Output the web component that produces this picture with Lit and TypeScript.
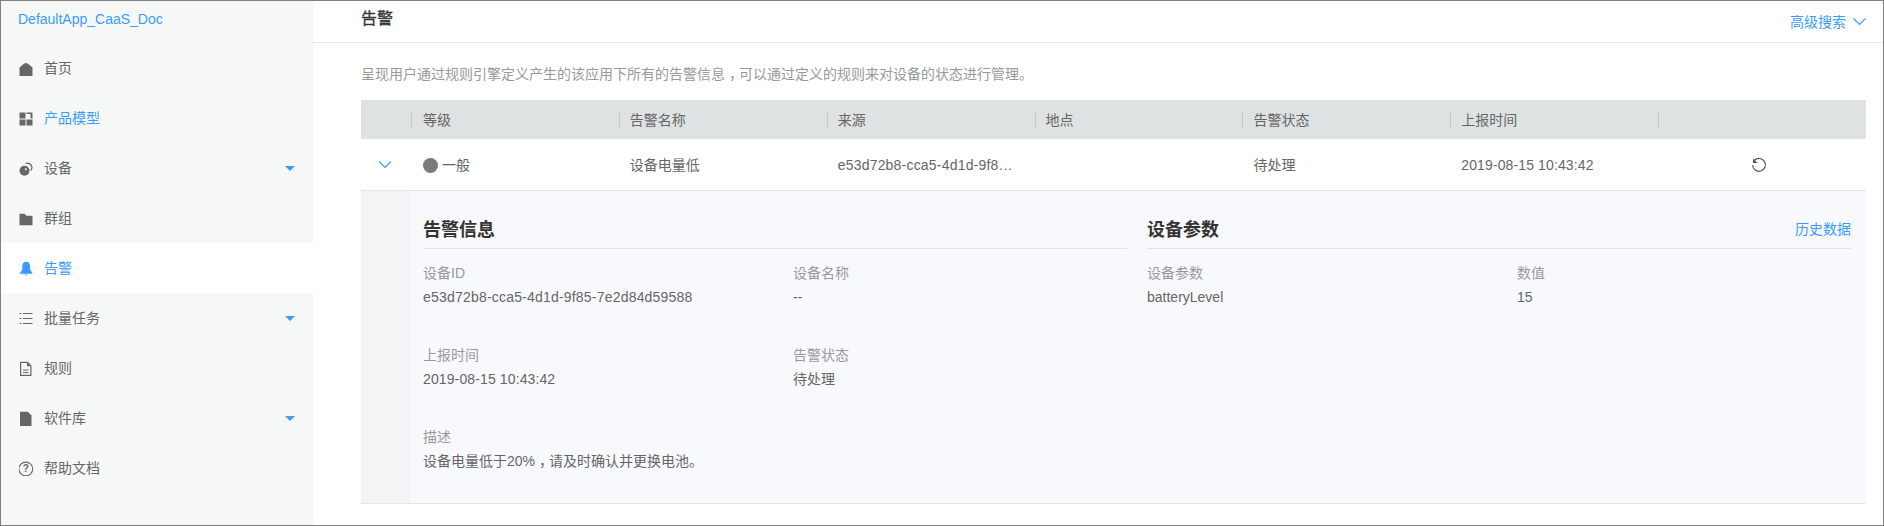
import { LitElement, html, css, svg } from "lit";
import { customElement } from "lit/decorators.js";

const icons: Record<string, unknown> = {
  home: svg`<path fill="currentColor" d="M.5 16V7.500L4 4.500C5 3.500 6 3 7 3s2 .5 3 1.500l3.500 3V16z"/>`,
  model: svg`<path fill="currentColor" d="M.5 2.500h6v6h-6zM.5 9.500h6v6h-6zM7.500 9.500h6v6h-6zM7.500 2.500h6v6h-2v-4.500h-4z"/>`,
  device: svg`<circle cx="5.500" cy="10.700" r="5" fill="currentColor"/><circle cx="6.800" cy="9.200" r="1" fill="#f6f8f8"/><path fill="none" stroke="currentColor" stroke-width="1.300" d="M6.500 3.500A4.800 4.800 0 0 1 13 7.500a4.800 4.800 0 0 1-1.500 3"/>`,
  group: svg`<path fill="currentColor" d="M.5 3.800h5l2 2h6v9.400H.5z"/>`,
  bell: svg`<path fill="currentColor" d="M7 1.700c-2.500 0-3.700 2-3.700 4.300v3.500L1 13v.7h12.400V13l-2.300-3.500V6c0-2.300-1.300-4.300-4.100-4.300zM5.300 14.400h3.400L7 15.800z"/>`,
  list: svg`<path fill="currentColor" d="M.5 3h2v1.100h-2zM4 3h9.500v1.100H4zM.5 8h2v1.100h-2zM4 8h9.500v1.100H4zM.5 13h2v1.100h-2zM4 13h9.500v1.100H4z"/>`,
  rule: svg`<path fill="none" stroke="currentColor" stroke-width="1.200" d="M1.600 2.300h6.900l3.400 3.400v9.700H1.600z"/><path fill="currentColor" d="M8 2.300l4 4H8zM4 9.500h5.500v1.100H4zM4 12h5.500v1.100H4z"/>`,
  file: svg`<path fill="currentColor" d="M1 1.700h7.800L12.500 5.400V16H1z"/>`,
  help: svg`<circle cx="6.800" cy="9" r="6.900" fill="none" stroke="currentColor" stroke-width="1.100"/><text x="6.800" y="12.300" text-anchor="middle" font-size="10" font-weight="700" font-family="Liberation Sans" fill="currentColor">?</text>`,
};

const nav = [
  ["home", "首页", 0, 0],
  ["model", "产品模型", 1, 0],
  ["device", "设备", 0, 1],
  ["group", "群组", 0, 0],
  ["bell", "告警", 2, 0],
  ["list", "批量任务", 0, 1],
  ["rule", "规则", 0, 0],
  ["file", "软件库", 0, 1],
  ["help", "帮助文档", 0, 0],
] as const;

const chevron = svg`<path fill="none" stroke="currentColor" stroke-width="1.100" d="M.5.500 6.500 6.500 12.500.500"/>`;
const comma = html`<span class="cm">，</span>`;

@customElement("app-root")
export class AppRoot extends LitElement {
  static styles = css`
    :host {
      display: block;
      width: 1884px;
      height: 526px;
      box-sizing: border-box;
      border: 1px solid #7f7f7f;
      font: 14px/20px "Liberation Sans", "Noto Sans CJK SC", sans-serif;
      color: #666;
      overflow: hidden;
      background: #fff;
    }
    .shell { display: flex; height: 524px; }
    .side { width: 312px; flex: none; background: #f6f8f8; }
    .app { height: 42px; padding: 7px 0 0 17px; box-sizing: border-box; color: #3d9bff; line-height: 22px; }
    .nav { height: 50px; display: flex; align-items: center; padding: 0 17px 0 18px; color: #666; }
    .nav.blue { color: #3d9bff; }
    .nav.on { color: #3d9bff; background: #fff; }
    .nav svg.ic { width: 16px; height: 16px; margin-right: 9px; flex: none; color: #666; }
    .nav.on svg.ic { color: #3d9bff; }
    .nav span { flex: 1; }
    .tri { width: 0; height: 0; border: 5px solid transparent; border-top: 5px solid #3d9bff; border-bottom: 0; margin-right: 1px; }
    .main { flex: 1; min-width: 0; }
    .top { height: 42px; box-sizing: border-box; border-bottom: 1px solid #e6e6e6; display: flex; justify-content: space-between; padding: 0 17px 0 48px; }
    .top h1 { margin: 0; font-size: 16px; font-weight: 400; color: #333; line-height: 36px; -webkit-text-stroke: .3px #333; }
    .adv { color: #3d9bff; display: flex; align-items: center; gap: 7px; height: 41px; }
    .adv svg { width: 13px; height: 7px; }
    .desc { margin: 0; padding: 21px 0 0 48px; height: 57px; box-sizing: border-box; color: #999; }
    .cm { font-feature-settings: "halt"; padding: 0 3px 0 4px; }
    .table { margin: 0 17px 0 48px; }
    .row { display: grid; grid-template-columns: 50px repeat(7, 1fr); align-items: center; }
    .head { height: 39px; background: #dfe2e2; }
    .head div { height: 14px; line-height: 14px; border-left: 1px solid #c4c7c7; padding-left: 10px; }
    .head div:first-child { border: 0; padding: 0; }
    .head div:nth-child(2) { padding-left: 11px; }
    .body { height: 52px; box-sizing: border-box; border-bottom: 1px solid #e5e5e5; }
    .body > div { padding-left: 11px; white-space: nowrap; overflow: hidden; text-overflow: ellipsis; padding-right: 18px; }
    .body > div:first-child { padding: 0 0 0 17px; color: #3d9bff; display: flex; }
    .body svg.ch { width: 14px; height: 7px; }
    .dot { display: inline-block; width: 15px; height: 15px; border-radius: 50%; background: #7b7b7b; vertical-align: -3px; margin: 0 4px 0 1px; }
    .uuid { letter-spacing: .2px; }
    .date { letter-spacing: .12px; }
    .reload { width: 16px; height: 16px; display: block; margin-left: 82px; }
    .detail { display: flex; height: 313px; box-sizing: border-box; border-bottom: 1px solid #e5e5e5; background: #f3f4f6; }
    .panel { margin-left: 49px; flex: 1; background: #f8f9fd; display: flex; padding: 0 15px 0 13px; }
    .sec { width: 724px; flex: none; }
    .sec.r { flex: 1; width: auto; }
    .sec h2 { margin: 0; height: 58px; box-sizing: border-box; padding-top: 25px; border-bottom: 1px solid #e2e4e6; font-size: 18px; line-height: 28px; font-weight: 700; color: #333; display: flex; justify-content: space-between; margin-right: 20px; }
    .sec.r h2 { margin-right: 0; }
    .sec h2 a { font-size: 14px; font-weight: 400; color: #3d9bff; line-height: 28px; margin-top: -1px; }
    .grid { display: grid; grid-template-columns: 370px 1fr; grid-auto-rows: 82px; padding-top: 14px; }
    .k { color: #999; height: 24px; line-height: 20px; }
    .v { color: #666; }
  `;

  render() {
    const cols = ["", "等级", "告警名称", "来源", "地点", "告警状态", "上报时间", ""];
    const field = (k: string, v: unknown) => html`<div><div class="k">${k}</div><div class="v">${v}</div></div>`;
    const uuid = "e53d72b8-cca5-4d1d-9f85-7e2d84d59588";
    const date = "2019-08-15 10:43:42";
    return html`<div class="shell">
      <aside class="side">
        <div class="app">DefaultApp_CaaS_Doc</div>
        ${nav.map(([ic, label, st, dd]) => html`<div class="nav ${st === 1 ? "blue" : st === 2 ? "on" : ""}">
          <svg class="ic" viewBox="0 0 16 16">${icons[ic]}</svg><span>${label}</span>${dd ? html`<i class="tri"></i>` : ""}
        </div>`)}
      </aside>
      <main class="main">
        <div class="top"><h1>告警</h1><div class="adv">高级搜索<svg viewBox="0 0 13 7">${chevron}</svg></div></div>
        <p class="desc">呈现用户通过规则引擎定义产生的该应用下所有的告警信息${comma}可以通过定义的规则来对设备的状态进行管理。</p>
        <div class="table">
          <div class="row head">${cols.map((c) => html`<div>${c}</div>`)}</div>
          <div class="row body">
            <div><svg class="ch" viewBox="0 0 13 7">${chevron}</svg></div>
            <div><i class="dot"></i>一般</div>
            <div>设备电量低</div>
            <div class="uuid">${uuid}</div>
            <div></div>
            <div>待处理</div>
            <div class="date">${date}</div>
            <div><svg class="reload" viewBox="0 0 16 16"><path fill="none" stroke="#555" stroke-width="1.200" d="M3.500 3.300A6.400 6.400 0 1 1 1.600 8"/><path fill="#555" d="M2 1.500v4.500h4.500z"/></svg></div>
          </div>
          <div class="detail"><div class="panel">
            <section class="sec">
              <h2>告警信息</h2>
              <div class="grid">
                ${field("设备ID", html`<span class="uuid">${uuid}</span>`)}
                ${field("设备名称", "--")}
                ${field("上报时间", html`<span class="date">${date}</span>`)}
                ${field("告警状态", "待处理")}
                ${field("描述", html`设备电量低于20%${comma}请及时确认并更换电池。`)}
              </div>
            </section>
            <section class="sec r">
              <h2>设备参数<a>历史数据</a></h2>
              <div class="grid">
                ${field("设备参数", "batteryLevel")}
                ${field("数值", "15")}
              </div>
            </section>
          </div></div>
        </div>
      </main>
    </div>`;
  }
}
